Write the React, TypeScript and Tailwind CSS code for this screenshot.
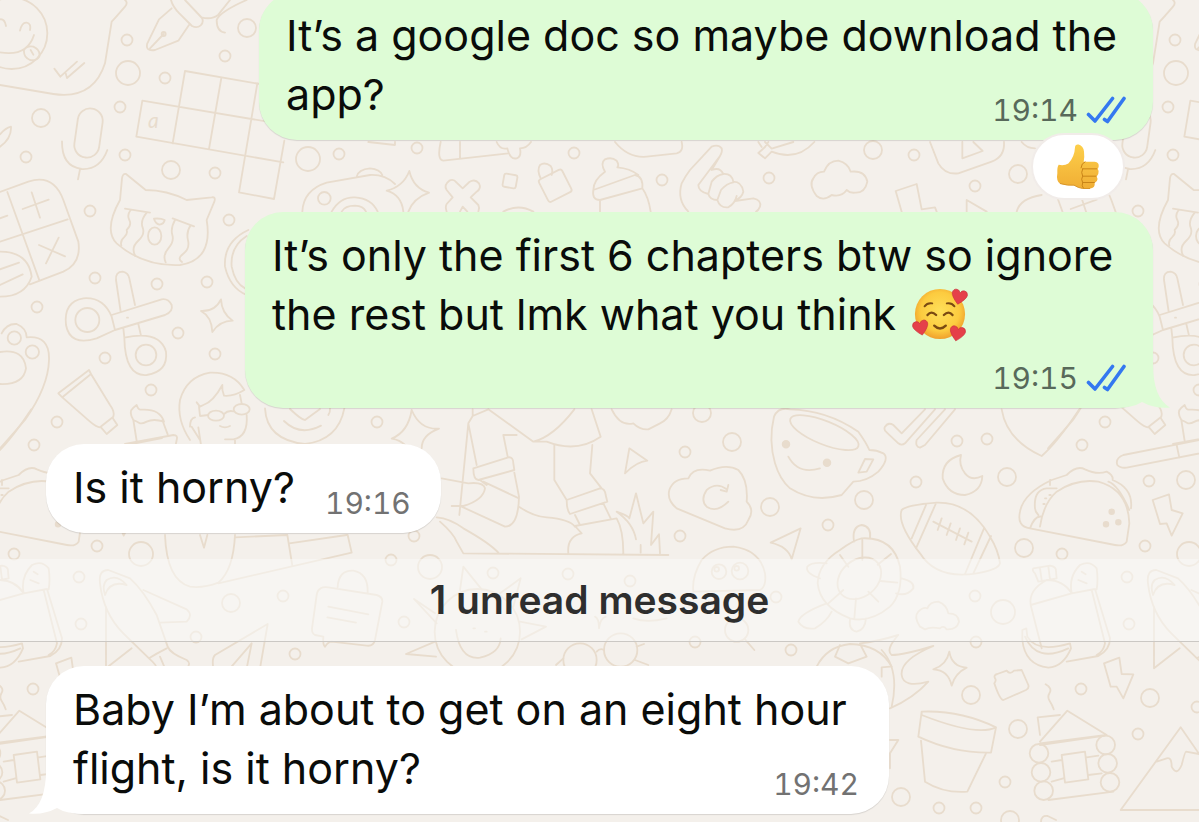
import React from 'react';

// [cx, cy, r] of the loose dots scattered between the doodles
const DOTS: [number, number, number][] = [
  [127, 40, 5.5], [225, 56, 5.5], [165, 78, 5.5], [120, 107, 5.5], [125, 155, 5.5], [26, 157, 5.5],
  [215, 173, 5.5], [90, 211, 5.5], [229, 220, 5.5], [95, 278, 5.5], [157, 284, 5.5], [207, 282, 5.5],
  [37, 307, 5.5], [178, 333, 5.5], [105, 358, 5.5], [215, 354, 5.5], [151, 390, 5.5], [57, 422, 5.5],
  [34, 445, 5.5], [377, 422, 5.5], [97, 546, 5.5], [14, 554, 5.5], [391, 560, 5.5], [79, 577, 5.5],
  [283, 596, 5.5], [81, 624, 5.5], [196, 637, 5.5], [295, 654, 5.5], [404, 622, 5.5], [414, 536, 5.5],
  [685, 452, 5.5], [680, 536, 5.5], [493, 573, 5.5], [568, 574, 5.5], [630, 581, 5.5], [776, 597, 5.5],
  [695, 642, 5.5], [791, 650, 5.5], [957, 441, 5.5], [987, 439, 5.5], [916, 482, 5.5], [828, 525, 5.5],
  [101, 481, 5.5], [975, 596, 5.5], [976, 642, 5.5], [33, 689, 5.5], [149, 707, 5.5], [90, 734, 5.5],
  [1005, 782, 5.5], [939, 808, 5.5], [976, 808, 5.5], [339, 154, 5.5], [417, 148, 5.5], [574, 153, 5.5],
  [662, 180, 5.5], [769, 178, 5.5], [914, 155, 5.5], [975, 186, 5.5],
  [247, 28, 9], [41, 118, 9], [171, 170, 9], [231, 603, 9], [702, 413, 9], [732, 442, 9], [770, 507, 9],
  [864, 500, 9], [1007, 477, 9], [1024, 548, 9], [138, 480, 9], [971, 695, 9], [102, 698, 9],
  [1018, 729, 9], [901, 797, 9], [1010, 820, 9], [1018, 174, 9], [873, 150, 9],
  [128, 73, 12], [141, 554, 12], [430, 567, 12], [1003, 612, 12], [308, 159, 12],
];

const TILE_WIDTH = 1048;

function Patch({ x, y, children }: { x: number; y: number; children: React.ReactNode }) {
  return (
    <g transform={`translate(${x} ${y}) scale(${1 / 3})`} strokeWidth={5.5}>
      {children}
    </g>
  );
}

function DoodleTile() {
  return (
    <>
      {DOTS.map(([cx, cy, r]) => (
        <circle key={`${cx}-${cy}`} cx={cx} cy={cy} r={r} strokeWidth={1.8} />
      ))}

      <Patch x={0} y={0}>
        {/* smiley in a speech bubble */}
        <circle cx={35} cy={100} r={107} />
        <path d="M0 58q14-2 18 20M60 92q6-26 20-24t10 22M-10 155Q80 175 102 105M72 150q10-14 28-10 22 10 18 30-8 14-28 10-20-8-18-30M92 150l8 14" />
        <path d="M0 255L160 282Q280 300 315 190L335 65Q345 55 375 20Q385 8 375 0" />
        <path d="M163 206l18 24 50-45M197 220l4 14 52-45" />
        {/* fountain pen */}
        <path d="M515 25L477 58 442 130Q435 155 465 150L535 122 567 75M491 102L450 145M513 0q5 20 25 40l38 38q15 8 26-2 10-10 4-22L555 0M605 52q30 8 50-8L690 0M740 0Q660 35 650 60Q650 95 675 98" />
        <circle cx={491} cy={102} r={6} />
        {/* microphone */}
        <rect x={228} y={325} width={75} height={148} rx={37} transform="rotate(8 265 399)" />
        <path d="M186 424Q185 500 245 507Q300 510 322 450M240 508l-6 30" />
        {/* crossword */}
        <path d="M555 213L780 252M427 302L850 373M409 410L850 487M717 577L822 597 853 422M427 302L409 410M555 213L518 430M664 234L627 447M772 250L717 577" />
        {/* crying cat */}
        <path d="M437 570L378 522Q368 520 366 535L360 600Q310 690 350 730Q430 800 540 795Q640 780 620 660L643 605Q648 590 635 592L560 600Q500 570 437 570" />
        <path d="M375 626L450 638M518 655L582 679M392 630q-12 15-4 30t-8 30q4 12-8 22t-8 25M440 638q-20 25-12 45t-14 40-8 45M525 660q-14 25-8 45t-12 40-8 42M572 676q-14 20-8 45t-14 40-4 25M462 656q20-2 32 4-2 12-16 14-12-4-16-18" />
        <ellipse cx={464} cy={708} rx={20} ry={26} />
        {/* calculator */}
        <path d="M0 576L85 545Q160 520 190 600L235 725Q245 790 190 815L90 853M22 576L117 838M0 725L203 658M68 627l78-28M95 577l25 76M117 735l78 34M176 713l-38 77M0 655l22-8M0 755Q85 755 95 830Q75 890 0 890M0 808l57-20M0 855l68-32" />
        <path d="M0 403Q15 385 33 380Q35 415 0 440" />
        {/* scissors */}
        <circle cx={262} cy={960} r={36} />
        <circle cx={438} cy={1065} r={31} />
        <path d="M345 990L290 1015Q210 1040 198 975Q190 905 250 895Q310 890 335 950L345 990L495 945Q520 935 515 915Q505 895 485 898L335 945M362 935L348 840Q346 815 368 815Q385 818 388 835L405 915M370 985l3 28M415 972l8 35M373 1013Q375 1130 440 1125Q505 1115 498 1055Q480 990 373 1013M381 953h3" />
        <path d="M663 898Q665 940 698 962Q660 962 637 996Q635 950 603 933Q645 935 663 898" />
        <path d="M745 690Q670 725 675 800Q690 865 740 885M740 708Q690 740 695 800Q705 850 735 865" />
        {/* paw */}
        <path d="M0 1056Q72 1045 78 1105Q70 1155 0 1152M5 1000Q20 970 50 972Q80 985 80 1012Q150 1005 147 1080Q145 1160 75 1260L0 1345" />
        <circle cx={43} cy={1014} r={20} />
        <circle cx={97} cy={1056} r={20} />
      </Patch>

      <Patch x={0} y={340}>
        <path d="M175 160L267 90 273 102 187 172ZM273 102L330 195Q345 215 340 230L300 262Q290 262 270 245L187 172M303 262L320 282 352 255 338 234" />
        <path d="M400 240Q385 215 400 203l10-8q5 15 12 14Q480 205 492 245Q460 235 440 245q-15 8-22 4t-18-9L410 303M487 240L503 283M375 312L520 285Q535 285 530 300L527 315" />
        {/* person with glasses */}
        <path d="M570 300Q530 240 540 180Q560 110 630 98Q700 95 733 150Q700 170 672 167Q665 150 667 135Q640 185 610 195L600 200 590 187M597 200L600 228M570 260Q570 235 585 232M595 262L603 315M600 300L575 260M600 228L625 225M672 222q12-12 28-8M720 165L725 190M740 225Q745 290 700 298H675M705 300V315M660 258q15 8 30 0" />
        <ellipse cx={648} cy={227} rx={24} ry={15} />
        <ellipse cx={725} cy={208} rx={24} ry={16} />
        <path d="M795 205Q800 300 915 312Q1015 300 1033 205M852 243Q900 290 963 257M870 207Q905 240 915 240L960 207M985 225q6-10 5-20" />
        <path d="M1235 210Q1260 270 1317 266Q1265 285 1265 325M1235 210Q1225 275 1175 296Q1200 300 1215 315" />
      </Patch>

      <Patch x={230} y={120}>
        <path d="M415 66L495 75V66M217 275Q220 210 290 188L420 165Q465 163 495 192M380 170Q385 148 420 145Q450 148 457 165M305 275Q330 230 375 232Q425 235 443 275M335 275Q345 257 375 257Q400 258 408 275" />
        <circle cx={283} cy={235} r={19} />
        <path d="M538 153Q550 205 597 218Q550 235 535 275M538 153Q520 200 470 212Q515 225 520 275" />
        <path d="M650 275Q645 260 650 252L668 232 650 210Q640 195 658 182Q670 175 680 188L698 205 718 186Q735 175 747 190Q755 205 740 215L722 232 745 255Q750 265 745 275M690 275l8-15 14 15" />
        <rect x={820} y={163} width={40} height={40} rx={6} transform="rotate(10 840 183)" />
        <path d="M632 66Q620 120 640 122L835 100M690 66V115M800 66Q810 90 832 85Q840 120 860 115Q875 110 870 85Q890 85 903 66" />
        <rect x={937} y={160} width={78} height={75} rx={8} transform="rotate(-27 975 198)" />
        <path d="M932 175Q920 150 930 135Q945 125 962 138Q970 150 965 165" />
        {/* woolly hat */}
        <path d="M1110 275V240Q1085 240 1090 210L1215 165Q1240 170 1237 205L1110 240M1090 210Q1090 180 1125 155Q1110 130 1125 118Q1145 110 1160 122Q1168 135 1162 142Q1200 145 1225 165M1237 205Q1255 230 1262 275" />
        <path d="M820 275q45-25 90 0M1155 66Q1195 115 1250 110L1340 100Q1362 95 1355 66" />
      </Patch>

      <Patch x={620} y={120}>
        {/* call me hand */}
        <path d="M205 275Q170 240 185 190Q195 170 210 150L275 80Q295 72 305 85Q308 95 300 108L235 195M300 108L275 150Q300 140 310 162M235 195Q235 215 265 222L275 185Q290 165 310 162Q335 160 340 185Q365 185 370 215Q365 235 345 240M265 222Q270 240 292 240L303 210Q320 190 340 187M292 240Q300 265 325 262Q345 250 350 228M345 243L400 235Q425 240 420 260Q415 272 408 275" />
        <path d="M415 66l10 15M445 66l-10 15-20 18 20 16 20-20M435 66l20 20L520 66M455 95Q530 125 583 66" />
        <path d="M590 228Q565 195 580 175Q590 155 612 155Q625 122 655 122Q685 130 692 155Q735 150 742 185Q735 220 705 218Q690 220 680 210Q665 232 635 225Q610 245 590 228" />
        <path d="M930 66L955 130Q975 165 1015 160L1115 125Q1155 110 1152 66M1027 66V115L1088 93L1060 66" />
        <path d="M845 275L827 213 890 192 905 268 945 262 950 275M1040 275V240L1100 275M1190 275Q1200 235 1265 225M1205 66Q1220 85 1245 85" />
      </Patch>

      <Patch x={0} y={420}>
        <path d="M495 345Q500 480 570 500Q610 505 655 488Q700 450 705 345M600 345L612 383 622 345M655 490L1055 398 1043 345M705 352L862 345 877 437M868 370L1040 345" />
        {/* rocket */}
        <path d="M300 490Q295 450 325 450L390 475Q430 510 470 585L503 680Q510 700 560 720Q575 730 560 745M300 490Q310 580 370 640L447 715M318 560V745L395 685M430 510L560 568Q580 585 560 605L480 608M315 525Q330 480 380 495Q350 460 320 480Q305 495 315 525M447 715Q470 735 470 745M500 685Q470 700 447 715M480 710l15 35" />
        <path d="M780 745L803 612 645 705Q635 715 640 745M690 745L755 670 740 745" />
        <path d="M962 505Q970 500 985 502L1130 525Q1148 530 1147 545L1125 660Q1120 680 1100 677L995 665Q985 665 975 680Q968 675 970 650L945 645Q935 640 936 625L950 525Q952 510 962 505M985 560L1105 583M982 592L1068 608M1013 502Q1015 450 1060 452Q1105 460 1103 518" />
      </Patch>

      <Patch x={400} y={400}>
        {/* hiker */}
        <path d="M218 28V48L205 70 230 195M265 28L400 125Q460 110 523 28M218 48L265 28M400 125L440 125Q530 160 602 110L575 28M310 105L323 170M310 105H350M220 205L325 172Q340 170 340 190L343 210 235 240Q220 240 220 205M343 218L357 290Q355 380 315 380L185 320M250 245L357 295M205 70L178 345M155 318H190Q250 300 255 265Q250 245 205 250L125 235M240 240L260 255M463 135V240L500 300M577 135L570 220 605 265M500 300L600 265Q615 265 617 285L622 305 510 342Q500 330 500 300M525 345L540 375M610 310L632 355M505 460Q500 410 545 400L525 378 650 355Q670 390 670 460M357 320Q400 350 440 352Q510 358 525 380M110 352Q150 355 190 385Q270 430 295 458M120 365Q160 400 170 425L190 460 805 465" />
        <path d="M650 335Q700 370 708 418M650 335Q690 350 688 355L708 280 730 370 760 335 753 435 777 403 780 460M722 435V458" />
        <path d="M688 145L742 182Q710 185 675 220ZM635 28Q660 80 700 70Q720 90 745 88L780 70Q805 60 815 28" />
        <path d="M975 385L830 325Q800 300 808 270Q820 235 865 235Q880 200 930 212Q980 190 1015 210Q1045 240 1040 305Q1065 330 1045 360Q1030 400 975 385M980 268Q950 245 920 270Q900 300 920 320Q950 340 985 305M962 270L980 275 985 255" />
        <path d="M1112 428L1202 385 1175 478Q1165 440 1112 428" />
        <path d="M880 575Q875 530 905 480Q940 440 1000 440Q1080 450 1095 520Q1100 560 1080 570Z" />
        <circle cx={957} cy={515} r={22} />
        <circle cx={1020} cy={513} r={25} />
        <circle cx={950} cy={508} r={7} />
        <circle cx={1010} cy={505} r={7} />
        {/* sun */}
        <circle cx={232} cy={695} r={128} />
        <path d="M180 570L190 500 245 568M300 580L362 535 340 620M105 640L42 597 110 670M105 725L18 762 108 770M360 665L438 680 365 718M168 690Q180 780 240 773Q300 760 302 715M220 685h5M255 695h5" />
        <circle cx={540} cy={780} r={50} />
        <circle cx={662} cy={750} r={50} />
        <path d="M590 755q10-12 22-5M710 740l22-8M705 780l40 15M490 775l-22 20M585 650q12 5 12 35q4-30 20-35M700 655Q740 670 800 655" />
        <circle cx={1010} cy={690} r={35} />
        <path d="M1035 718l28 32" />
      </Patch>

      <Patch x={790} y={400}>
        {/* mug */}
        <path d="M0 28Q-35 20-48 50Q-65 120-45 190Q-30 240 0 265Q70 310 155 285L190 245Q230 245 265 215Q300 175 280 160Q260 150 238 150Q230 130 205 95Q110 30 0 28M225 177L250 178 230 215 205 218ZM-5 170Q25 225 90 205" />
        <ellipse cx={103} cy={98} rx={110} ry={35} transform="rotate(22 103 98)" />
        <circle cx={111} cy={188} r={10} fill="#e8dccd" />
        <circle cx={-12} cy={133} r={10} fill="#e8dccd" />
        <path d="M405 28L335 100 310 75Q295 65 285 80Q280 90 290 97L325 130Q335 138 345 130L435 28M465 28L380 120Q375 140 390 143L405 135 495 28M635 28Q650 120 755 168Q800 130 868 28" />
        <path d="M513 165Q455 180 458 235Q475 285 525 285Q575 275 577 228Q545 245 525 220Q505 195 513 165" />
        {/* football */}
        <path d="M335 330Q350 315 440 308Q540 305 600 410Q625 450 630 490Q625 510 560 520Q440 540 390 460Q320 370 335 330M365 415L408 315M378 445L437 312M525 522L582 385M550 520L603 408M430 365L545 425M455 355l-12 35M482 370l-12 35M510 385l-12 35M535 398l-12 35" />
        {/* taco */}
        <path d="M720 385Q680 380 690 335Q700 280 785 240L830 225Q860 195 885 208Q920 225 950 215Q970 225 968 240Q1030 265 1023 325M780 240v15M750 380Q760 310 800 275Q860 235 925 245Q1015 270 1018 370L1010 425Q1000 440 975 435L720 385Q735 345 755 350M955 245Q985 255 1018 330M735 325Q730 270 770 265H800M745 345Q735 335 735 325M765 295h4M760 312h4M778 285h4" />
        <circle cx={965} cy={335} r={7} fill="#e8dccd" />
        <circle cx={948} cy={373} r={7} fill="#e8dccd" />
        <circle cx={985} cy={367} r={7} fill="#e8dccd" />
        <path d="M1260 114L1000 165Q975 175 982 195Q990 205 1010 203L1260 154M1160 135l8 38M1088 300L1137 283 1145 330 1178 340 1145 407 1130 370 1110 372Z" />
        {/* turtle */}
        <path d="M215 415Q310 410 330 500Q340 580 300 620Q240 670 180 655Q90 620 83 550Q85 490 150 450Q190 420 215 415M192 425Q185 380 215 375Q245 380 240 415M90 535Q45 520 52 500Q65 485 110 490M335 535Q375 545 370 565Q350 590 318 580M110 610Q30 640 25 665Q40 690 75 685Q110 665 125 635M180 658Q175 690 200 695Q225 690 228 655M217 420v60M150 465l25 35M303 462l-40 32M322 548l-50-5M265 605l-30-30M193 655l5-60M115 610l45-40" />
        <ellipse cx={208} cy={535} rx={72} ry={55} transform="rotate(-40 208 535)" />
        <path d="M390 680Q370 650 385 635Q400 620 412 625Q420 605 445 605Q470 615 475 640Q505 640 507 665Q500 690 470 688Q460 675 450 685Q420 680 405 688Z" />
        {/* backpack and banana */}
        <path d="M735 520Q725 510 730 505L780 497Q800 500 798 515L800 535L745 545ZM750 505l5 35M775 500l5 38M722 615Q715 570 770 540Q820 540 845 580L915 567M722 615L845 580M722 615L755 745M845 580Q835 530 870 495Q900 480 920 505Q925 540 920 568M905 570L945 730Q940 755 920 765M915 567L960 715Q960 750 925 768L830 785M875 515l12 8M865 540l25 10" />
        <path d="M697 690l12-5 3 25Q740 760 840 730L843 745Q820 800 775 803Q705 795 697 720ZM705 710Q740 790 835 745" />
        <path d="M80 800Q110 740 180 732Q270 735 305 800M150 735L135 770 175 790 230 770 210 732" />
      </Patch>

      <Patch x={860} y={620}>
        <path d="M65 90Q120 150 95 260M65 142L90 140M65 142V170M0 70Q50 65 115 45Q75 90 95 105Q130 105 220 78Q120 120 125 165Q130 205 205 185Q160 235 90 265M90 445V400L115 360H90" />
        <path d="M268 95Q275 140 320 143Q285 160 275 197Q265 150 220 148Q260 135 268 95" />
        <path d="M405 175Q400 165 412 162L440 152Q450 165 462 152L485 150 505 195Q508 205 498 210L430 240Q420 240 403 190Q410 180 405 175M732 130L778 113 785 162 820 163 790 235 770 200 752 200Z" />
        {/* plant pot */}
        <path d="M185 275Q300 270 408 322Q350 350 185 285ZM185 275L175 350Q280 400 393 398L408 322M183 362L195 485Q250 520 322 515L378 400" />
        {/* log cabin */}
        <path d="M557 193q20 12 12 25t0 25 12 25M540 365L622 272 740 345 540 370M540 345L533 292 600 285M540 375L735 347M575 425L605 420M575 485L610 475M605 405L675 395 685 478 615 488ZM680 412L715 407M685 465L725 460M565 540L760 515" />
        <circle cx={537} cy={400} r={28} />
        <circle cx={543} cy={457} r={28} />
        <circle cx={551} cy={512} r={28} />
        <circle cx={737} cy={375} r={28} />
        <circle cx={743} cy={430} r={28} />
        <circle cx={750} cy={487} r={28} />
        {/* mountain */}
        <path d="M1060 570H782L962 322 1030 420M890 425L920 415Q935 410 935 440Q950 470 965 435Q975 395 978 395L1017 402M543 606q0-20 20-18l25 12" />
      </Patch>
    </>
  );
}

function Wallpaper() {
  return (
    <svg
      className="pointer-events-none absolute top-0 left-0 -z-10"
      width={1199}
      height={822}
      fill="none"
      stroke="#e8dccd"
      strokeLinecap="round"
      strokeLinejoin="round"
      aria-hidden="true"
    >
      {[-TILE_WIDTH, 0, TILE_WIDTH].map(x => (
        <g key={x} transform={`translate(${x} 0)`}>
          <DoodleTile />
        </g>
      ))}
      <text x={148} y={128} fontSize={21} fontStyle="italic" fontFamily="Lato, sans-serif" stroke="none" fill="#e8dccd">
        a
      </text>
    </svg>
  );
}

function ReadTicks() {
  return (
    <svg width={40} height={28} fill="none" stroke="#3478f0" strokeWidth={3.6} strokeLinecap="round" strokeLinejoin="round" role="img" aria-label="Read">
      <path d="M2.5 18.5L9 25 26.5 2.5M18.5 23.5l3 2L38 2.5" />
    </svg>
  );
}

function ThumbsUp() {
  return (
    <svg width={44} height={47} viewBox="286 250 132 140" role="img" aria-label="Thumbs up">
      <defs>
        <linearGradient id="thumb" x1="0" y1="0" x2="0" y2="1">
          <stop offset="0" stopColor="#fdcf4a" />
          <stop offset="1" stopColor="#f0ae35" />
        </linearGradient>
      </defs>
      <path fill="url(#thumb)" d="M343 262Q344 252 354 254Q368 258 370 275Q372 290 369 306L402 306Q416 308 414 320Q413 326 411 327Q416 334 413 342Q411 348 408 349Q412 356 409 363Q406 368 402 369Q404 384 390 386L366 386Q352 384 340 376Q322 378 298 372Q286 362 290 340Q289 322 294 315Q312 318 323 311Q342 290 343 262Z" />
      <g fill="none" stroke="#c98418" strokeWidth={3} strokeLinecap="round">
        <path d="M366 327H408M366 349H406M366 368H401M373 306Q362 310 361 324" />
        <path d="M366 327Q360 338 366 349Q360 358 366 368Q362 378 368 385" />
      </g>
      <path fill="none" stroke="#d8962a" strokeWidth={3} d="M298 371Q322 378 340 376Q352 384 366 386H388" />
    </svg>
  );
}

function Heart({ x, y, tilt }: { x: number; y: number; tilt: number }) {
  return (
    <path
      transform={`translate(${x} ${y}) rotate(${tilt})`}
      fill="#e5404a"
      stroke="#c92b38"
      strokeWidth={0.6}
      d="M0 8Q-8 1-8-3Q-7.500-7-4-7Q-1-7 0-4Q1-7 4-7Q7.500-7 8-3Q8 1 0 8Z"
    />
  );
}

function HeartsFace() {
  return (
    <svg className="ml-1 inline-block align-[-12px]" width={56} height={54} viewBox="-1 -1 58 56" role="img" aria-label="Smiling face with hearts">
      <defs>
        <radialGradient id="face" cx="0.5" cy="0.45" r="0.55">
          <stop offset="0" stopColor="#fee05a" />
          <stop offset="0.7" stopColor="#fccb3f" />
          <stop offset="1" stopColor="#f0a02c" />
        </radialGradient>
      </defs>
      <circle cx={28} cy={26} r={26} fill="url(#face)" />
      <g fill="none" stroke="#7a4a12" strokeWidth={2} strokeLinecap="round">
        <path d="M12 18Q15 14 20 15M35 15Q40 14 43 18" />
        <path d="M15 27Q19 22 24 27M32 27Q37 22 41 27" strokeWidth={2.4} />
        <path d="M22 38Q28 44 34 38" strokeWidth={2.4} />
      </g>
      <Heart x={48} y={8} tilt={12} />
      <Heart x={8} y={40} tilt={-12} />
      <Heart x={46} y={46} tilt={12} />
    </svg>
  );
}

function Tail({ side }: { side: 'left' | 'right' }) {
  return (
    <svg
      className={side === 'right' ? 'absolute -right-[18px] bottom-0 -z-10' : 'absolute bottom-0 -left-[18px] -z-10 -scale-x-100'}
      width={58}
      height={44}
      aria-hidden="true"
    >
      <path d="M40 0Q40 34 57 43.500Q42 45 29 38Q20 44 0 44V0Z" fill={side === 'right' ? '#defcd6' : '#ffffff'} />
    </svg>
  );
}

function Time({ value, sent, className }: { value: string; sent?: boolean; className: string }) {
  return (
    <span className={`-mb-0.5 flex items-center gap-2 text-[30px] leading-8 tabular-nums ${sent ? 'text-[#58695a]' : 'text-[#727272]'} ${className}`}>
      <time>{value}</time>
      {sent && <ReadTicks />}
    </span>
  );
}

const BUBBLE = 'relative isolate max-w-full rounded-[38px] pt-[14px] pb-4 pl-[27px] shadow-[0_1px_1px_rgba(0,0,0,0.12)]';
const SENT = 'self-end bg-[#defcd6] pr-[27px]';
const RECEIVED = 'self-start bg-white pr-[30px]';

export default function App() {
  return (
    <main className="relative isolate flex min-h-screen flex-col overflow-hidden bg-[#f4f0eb] font-[Inter,sans-serif] text-[43px] leading-[59px] text-[#0a0c0a]">
      <Wallpaper />

      <section className="-mt-2 flex flex-col px-[46px]">
        <article className={`${BUBBLE} ${SENT} z-10 w-[894px]`}>
          <p>
            It’s a google doc so maybe download the app?
            <Time value="19:14" sent className="float-right mt-[29px]" />
          </p>
          <button
            type="button"
            aria-label="Reaction: thumbs up"
            className="absolute right-7 -bottom-[60px] flex h-[67px] w-[94px] items-center justify-center rounded-full border-2 border-[#f1ece9] bg-white"
          >
            <ThumbsUp />
          </button>
        </article>

        <article className={`${BUBBLE} ${SENT} mt-[72px] flex w-[908px] flex-col gap-[18px]`}>
          <p>
            It’s only the first 6 chapters btw so ignore the rest but lmk what you think <HeartsFace />
          </p>
          <Time value="19:15" sent className="self-end" />
          <Tail side="right" />
        </article>

        <article className={`${BUBBLE} ${RECEIVED} mt-9 flex items-end gap-[30px]`}>
          <p>Is it horny?</p>
          <Time value="19:16" className="shrink-0" />
        </article>
      </section>

      <h2 className="mt-[26px] border-b border-[#cbc8c4] bg-[#f9faf8]/55 text-center text-[39px] leading-[82px] font-semibold text-[#2e2e2e]">
        1 unread message
      </h2>

      <section className="mt-6 flex flex-col px-[46px]">
        <article className={`${BUBBLE} ${RECEIVED} w-[843px]`}>
          <p>
            Baby I’m about to get on an eight hour flight, is it horny?
            <Time value="19:42" className="float-right mt-[29px]" />
          </p>
          <Tail side="left" />
        </article>
      </section>
    </main>
  );
}
